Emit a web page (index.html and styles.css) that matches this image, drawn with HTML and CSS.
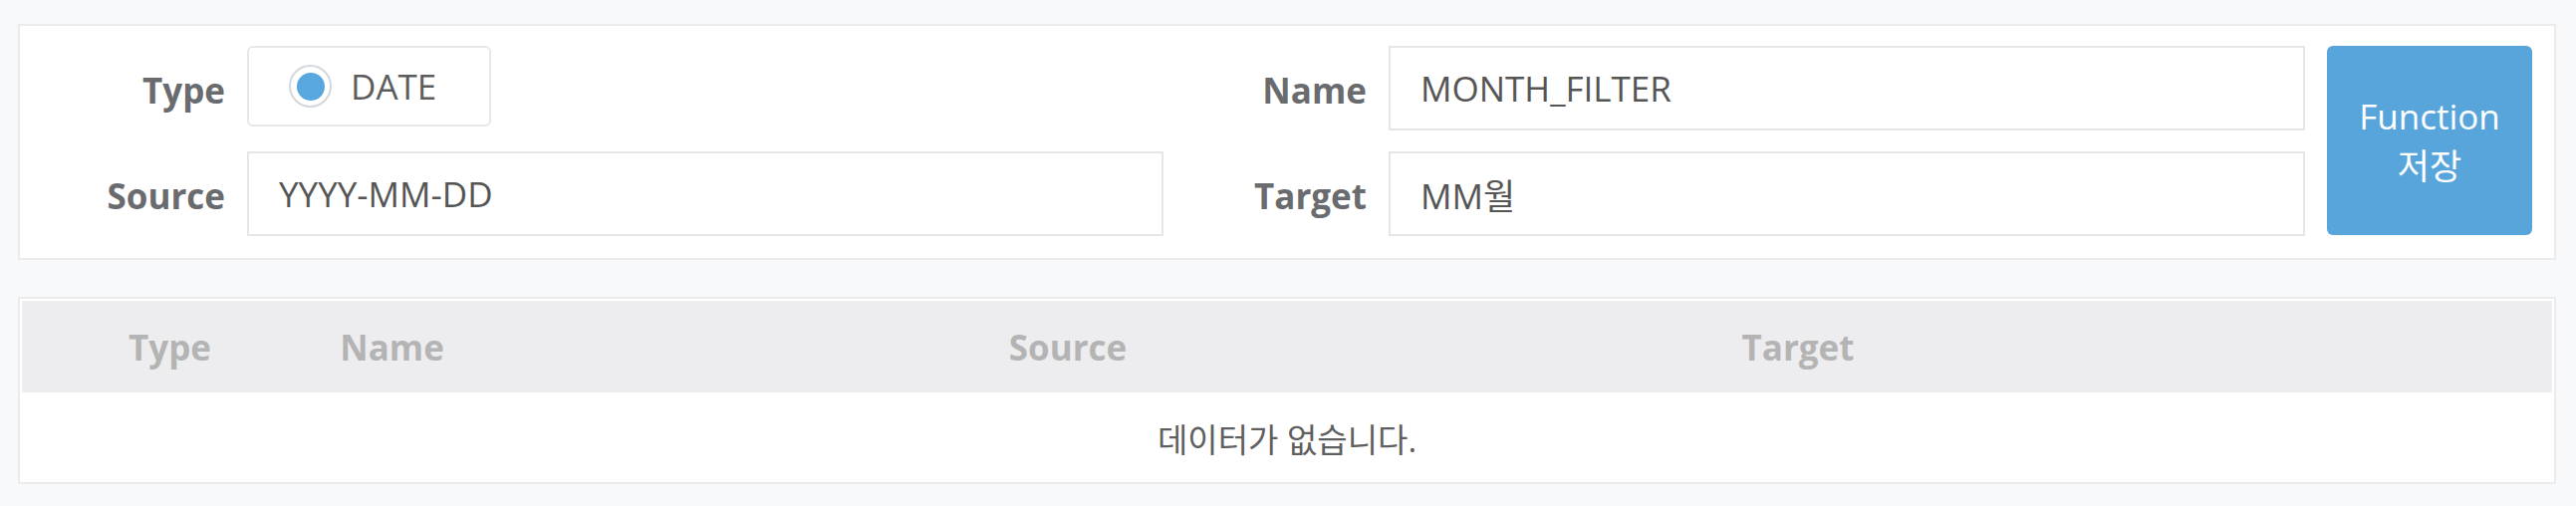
FILE: index.html
```html
<!DOCTYPE html>
<html lang="ko">
<head>
<meta charset="utf-8">
<title>Function</title>
<link rel="stylesheet" href="styles.css">
</head>
<body>
<div class="page">
  <section class="form-panel">
    <div class="form-grid">
      <div class="lbl">Type</div>
      <div class="field-type">
        <div class="radio-box">
          <span class="radio"><span class="dot"></span></span>
          <span class="radio-text">DATE</span>
        </div>
      </div>
      <div class="lbl">Name</div>
      <div class="input">MONTH_FILTER</div>
      <button class="save-btn">Function<br>저장</button>
      <div class="lbl">Source</div>
      <div class="input">YYYY-MM-DD</div>
      <div class="lbl">Target</div>
      <div class="input">MM월</div>
    </div>
  </section>

  <section class="table-panel">
    <div class="thead">
      <div class="th">Type</div>
      <div class="th">Name</div>
      <div class="th">Source</div>
      <div class="th">Target</div>
      <div class="th"></div>
    </div>
    <div class="empty">데이터가 없습니다.</div>
  </section>
</div>
</body>
</html>
```

FILE: styles.css
```css
* { box-sizing: border-box; }

html, body {
  margin: 0;
  padding: 0;
  background: #f8f9fb;
}

body {
  font-family: "Open Sans", "Noto Sans CJK KR", sans-serif;
  color: #5c5c5c;
}

.page {
  padding: 24px 20px 22px 18px;
  display: flex;
  flex-direction: column;
  gap: 37px;
}

.form-panel {
  background: #ffffff;
  border: 2px solid #ebebeb;
}

.form-grid {
  display: grid;
  grid-template-columns: 206px 1fr 182px 1fr 206px;
  grid-template-rows: 85px 85px;
  column-gap: 22px;
  row-gap: 21px;
  padding: 20px 22px 22px 0;
  align-items: center;
}

.lbl {
  text-align: right;
  font-weight: 700;
  font-size: 35px;
  color: #6a6b6e;
  padding-top: 4px;
}

.field-type {
  align-self: start;
}

.radio-box {
  display: inline-flex;
  align-items: center;
  height: 81px;
  padding: 0 53px 0 40px;
  border: 2px solid #e6e7e8;
  border-radius: 6px;
  background: #fff;
}

.radio {
  width: 43px;
  height: 43px;
  border-radius: 50%;
  border: 2px solid #d3d8de;
  display: flex;
  align-items: center;
  justify-content: center;
  margin-right: 19px;
}

.dot {
  width: 28px;
  height: 28px;
  border-radius: 50%;
  background: #58a7df;
}

.radio-text {
  font-size: 35px;
  color: #5c5c5c;
}

.input {
  height: 85px;
  border: 2px solid #e6e6e6;
  padding: 0 30px;
  display: flex;
  align-items: center;
  font-size: 35px;
  color: #555555;
  background: #fff;
}

.save-btn {
  grid-column: 5;
  grid-row: 1 / span 2;
  align-self: stretch;
  margin-bottom: 1px;
  border: none;
  border-radius: 6px;
  background: #58a5dc;
  color: #ffffff;
  font-family: "Open Sans", "Noto Sans CJK KR", sans-serif;
  font-size: 35px;
  line-height: 50px;
  padding: 0;
  padding-top: 2px;
}

.table-panel {
  background: #ffffff;
  border: 2px solid #ebebeb;
  padding: 2px;
}

.thead {
  display: grid;
  grid-template-columns: 297px 149px 1208px 258px 1fr;
  height: 92px;
  background: #ededef;
  align-items: center;
}

.th {
  text-align: center;
  font-weight: 700;
  font-size: 35px;
  color: #b4b4b4;
}

.empty {
  height: 88px;
  display: flex;
  align-items: center;
  justify-content: center;
  font-size: 33px;
  color: #5f5f5f;
  padding-top: 4px;
}
```
